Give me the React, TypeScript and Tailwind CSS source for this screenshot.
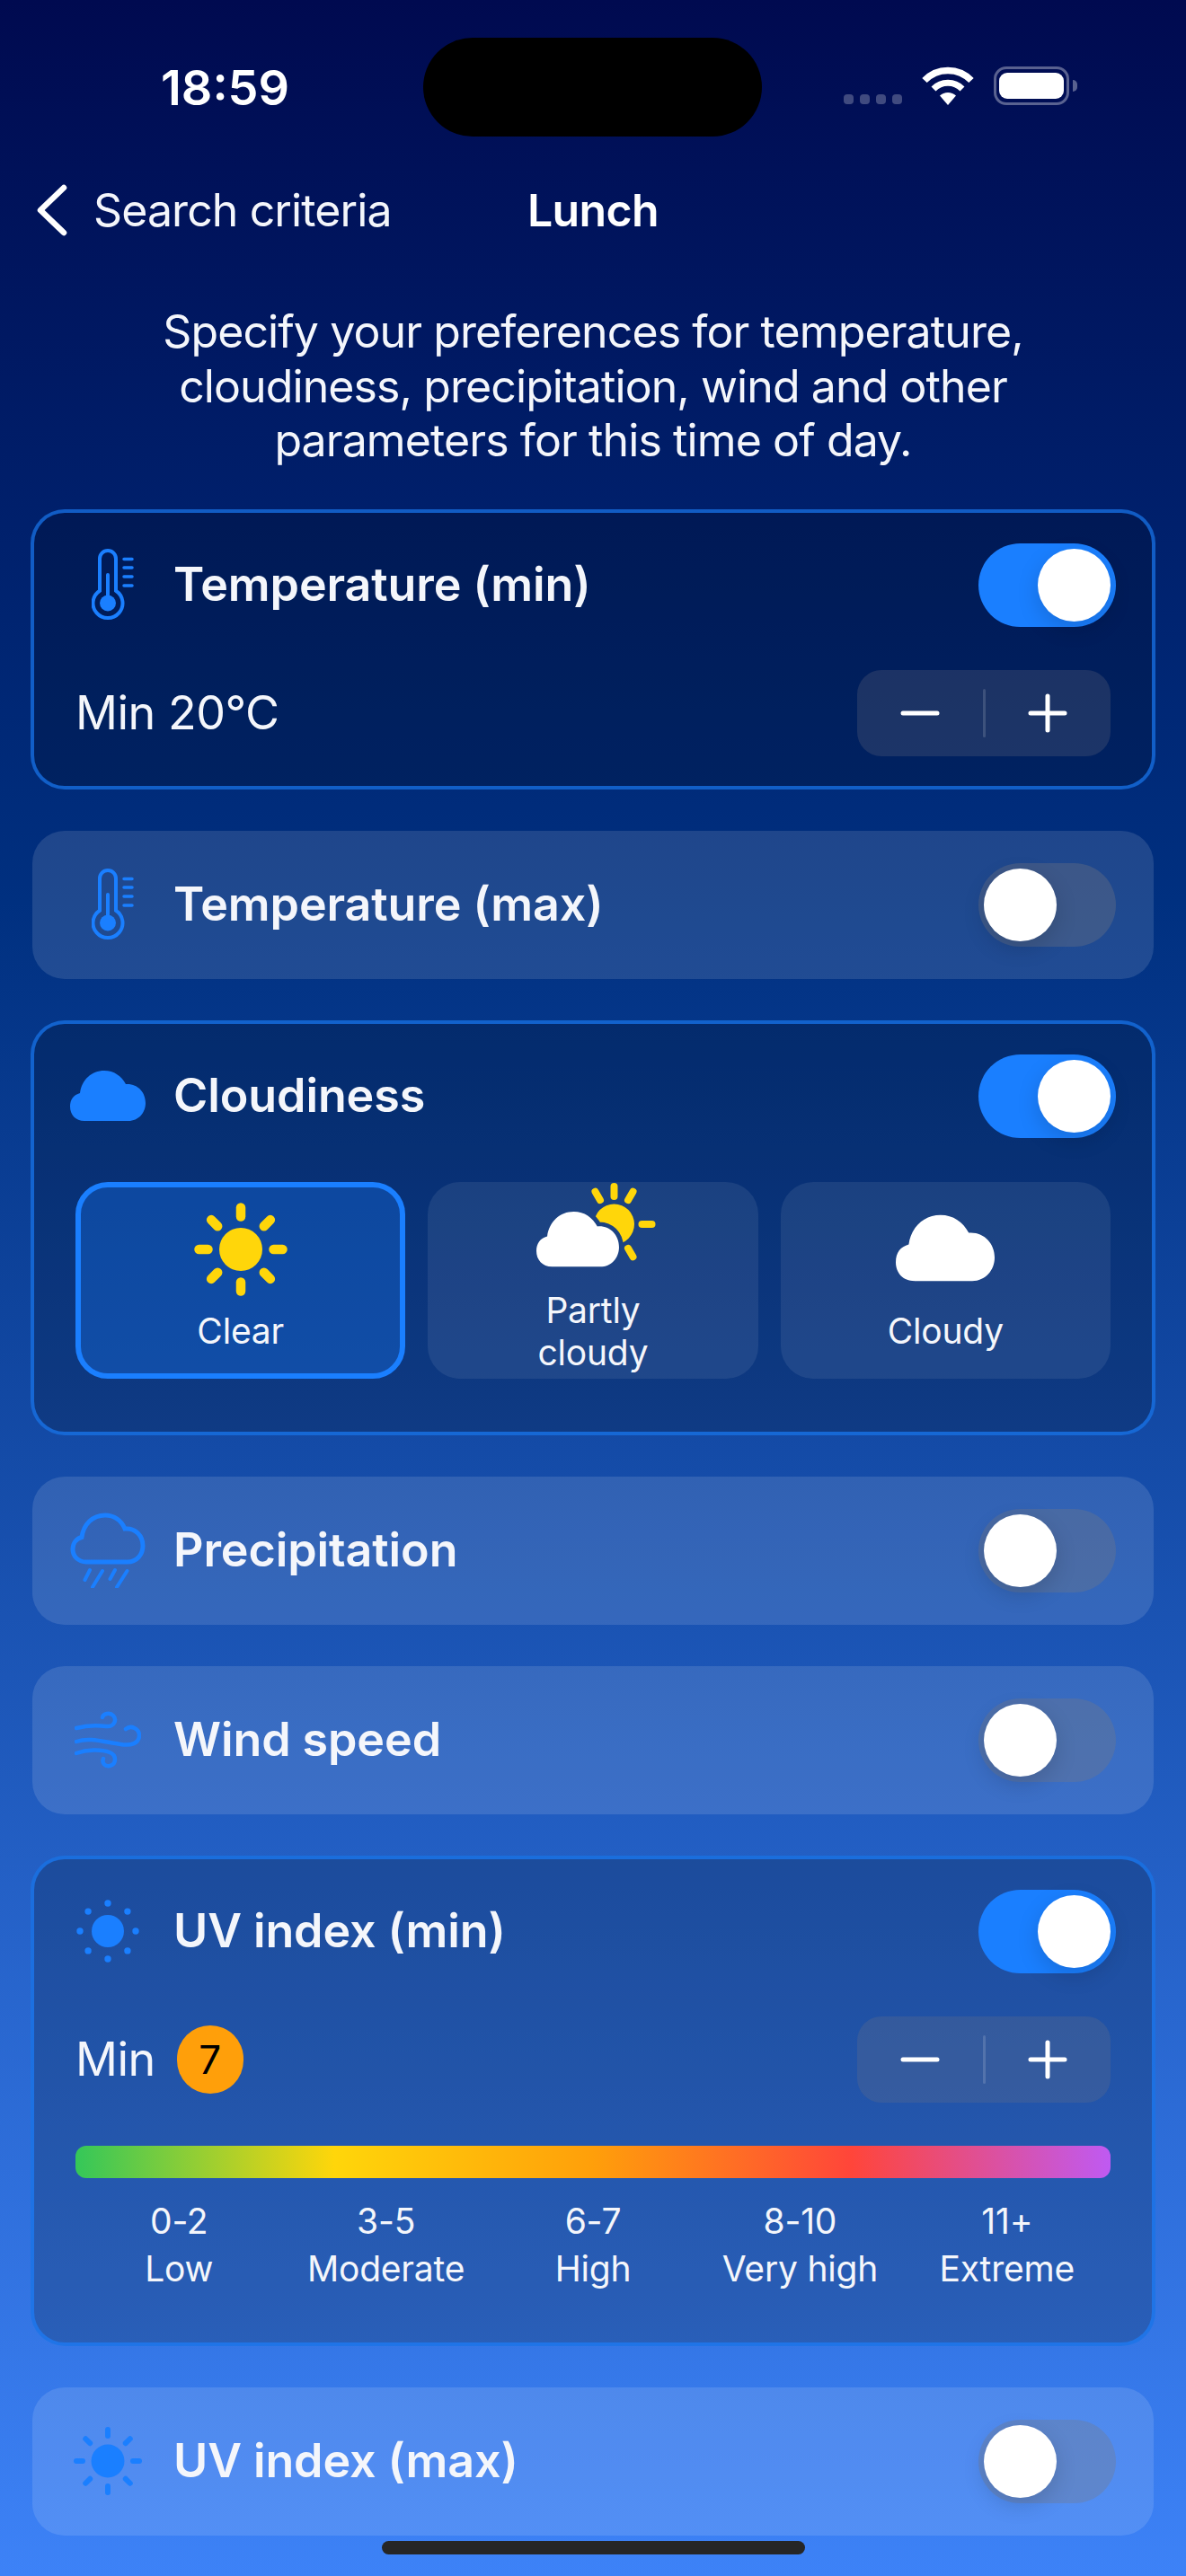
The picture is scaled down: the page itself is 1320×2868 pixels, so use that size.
import * as React from "react"

const CLOUD = "M16 56C6 56 0 49 0 40C0 32 4 27 11 25C13 10 24 0 38 0C49 0 57 6 62 15C75 14 84 24 84 36C84 47 76 56 65 56Z"

function Thermometer() {
  return (
    <svg width="47" height="80" viewBox="0 0 47 80" className="ml-[11px] shrink-0" fill="none" stroke="#1a7fff" strokeLinecap="round">
      <path d="M9 46.7V11a9 9 0 0 1 18 0V46.7A16.5 16.5 0 1 1 9 46.7Z" strokeWidth="4" />
      <circle cx="18" cy="60.5" r="9" fill="#1a7fff" stroke="none" />
      <path d="M18 29V55" strokeWidth="4" />
      <path d="M36 11.5H45M36 21H45M36 31H45M36 41H45" strokeWidth="3.5" />
    </svg>
  )
}

function CloudIcon() {
  return (
    <svg width="84" height="56" viewBox="0 0 84 56" className="shrink-0">
      <path d={CLOUD} fill="#1a7fff" />
    </svg>
  )
}

function RainIcon() {
  return (
    <svg width="84" height="84" viewBox="0 0 84 84" className="shrink-0" fill="none" stroke="#1a7fff" strokeLinecap="round">
      <path d="M18 55C8.500 55 3 48 3 41C3 34 7 29 13 27.500C15 13 25 3 39 3C49 3 57 9 61 18C73 17 81 26 81 37C81 47 74 55 64 55Z" strokeWidth="5" />
      <path d="M22 64L16.500 75M36 65L25 83M50 64L44.500 74M63.500 65L52 83" strokeWidth="4" />
    </svg>
  )
}

function WindIcon() {
  return (
    <svg width="74" height="64" viewBox="0 0 74 64" className="shrink-0" fill="none" stroke="#1a7fff" strokeWidth="4.500" strokeLinecap="round">
      <path d="M2 19C13 16 26 16 35 17C45 18 47 9 43 5C39 1 32 3 31 7" />
      <path d="M2 34C16 29 31 34 51 37C63 39 72 36 72 27C72 20 63 15 57 20" />
      <path d="M2 47C13 43 29 42 39 46C47 49 47 59 39 61C34 62 30 58 32 53" />
    </svg>
  )
}

function DottedSun() {
  const dots = [0, 45, 90, 135, 180, 225, 270, 315]
  return (
    <svg width="72" height="72" viewBox="-36 -36 72 72" className="shrink-0" fill="#1a7fff">
      <circle r="18" />
      {dots.map((a) => (
        <circle key={a} r="3.700" cx={31 * Math.cos((a * Math.PI) / 180)} cy={31 * Math.sin((a * Math.PI) / 180)} />
      ))}
    </svg>
  )
}

function Rays({ from, to, width, color, angles }: { from: number; to: number; width: number; color: string; angles: number[] }) {
  return (
    <>
      {angles.map((a) => {
        const r = (a * Math.PI) / 180
        return (
          <line
            key={a}
            x1={from * Math.cos(r)}
            y1={from * Math.sin(r)}
            x2={to * Math.cos(r)}
            y2={to * Math.sin(r)}
            stroke={color}
            strokeWidth={width}
            strokeLinecap="round"
          />
        )
      })}
    </>
  )
}

function RaySun() {
  return (
    <svg width="80" height="80" viewBox="-40 -40 80 80" className="shrink-0">
      <circle r="18.500" fill="#1a7fff" />
      <Rays from={28} to={35} width={6} color="#1a7fff" angles={[0, 45, 90, 135, 180, 225, 270, 315]} />
    </svg>
  )
}

function ClearSun() {
  return (
    <svg width="104" height="104" viewBox="-52 -52 104 104" className="shrink-0">
      <circle r="24" fill="#ffd60a" />
      <Rays from={36.500} to={46.500} width={10.500} color="#ffd60a" angles={[0, 45, 90, 135, 180, 225, 270, 315]} />
    </svg>
  )
}

function PartlyIcon() {
  return (
    <svg width="145" height="96" viewBox="0 0 145 96" className="shrink-0">
      <mask id="cut">
        <rect width="145" height="96" fill="white" />
        <path d={CLOUD} transform="translate(10 32) scale(1.095)" fill="black" stroke="black" strokeWidth="9" />
      </mask>
      <circle cx="96.500" cy="46" r="22.500" fill="#ffd60a" mask="url(#cut)" />
      <g transform="translate(96.500 46)">
        <Rays from={31} to={42} width={8} color="#ffd60a" angles={[0, 60, -60, -90, -120]} />
      </g>
      <path d={CLOUD} transform="translate(10 32) scale(1.095)" fill="white" />
    </svg>
  )
}

function CloudyIcon() {
  return (
    <svg width="110" height="75" viewBox="0 0 84 56" className="shrink-0">
      <path d={CLOUD} fill="white" />
    </svg>
  )
}

function Toggle({ on }: { on: boolean }) {
  return (
    <div className={on ? "flex h-[93px] w-[153px] shrink-0 -mr-[6px] items-center justify-end rounded-full bg-[#1a7fff] p-[6px]" : "flex h-[93px] w-[153px] shrink-0 -mr-[6px] items-center justify-start rounded-full bg-[#787880]/32 p-[6px]"}>
      <div className="h-[81px] w-[81px] rounded-full bg-white shadow-[0_8px_24px_rgba(0,0,0,0.15)]" />
    </div>
  )
}

function Stepper() {
  return (
    <div className="flex h-[96px] w-[282px] items-center rounded-[27px] bg-[#767680]/24">
      <div className="flex flex-1 items-center justify-center">
        <svg width="44" height="6" viewBox="0 0 44 6" stroke="white" strokeWidth="5" strokeLinecap="round">
          <path d="M3 3H41" />
        </svg>
      </div>
      <div className="h-[54px] w-[3px] rounded-full bg-white/15" />
      <div className="flex flex-1 items-center justify-center">
        <svg width="44" height="44" viewBox="0 0 44 44" stroke="white" strokeWidth="5" strokeLinecap="round">
          <path d="M3 22H41M22 3V41" />
        </svg>
      </div>
    </div>
  )
}

function Row({ icon, title, on }: { icon: React.ReactNode; title: string; on: boolean }) {
  return (
    <div className="flex items-center">
      <div className="flex w-[72px] shrink-0 justify-center">{icon}</div>
      <div className="ml-[37px] flex-1 text-[52px] leading-[62px] font-semibold tracking-[-0.1px] whitespace-nowrap text-[#f4f6fb]">{title}</div>
      <Toggle on={on} />
    </div>
  )
}

function OffCard({ icon, title }: { icon: React.ReactNode; title: string }) {
  return (
    <div className="mx-[36px] flex h-[165px] flex-col justify-center rounded-[36px] bg-white/12 px-[48px]">
      <Row icon={icon} title={title} on={false} />
    </div>
  )
}

function OnCard({ children, className }: { children: React.ReactNode; className: string }) {
  return (
    <div className={"mx-[34px] rounded-[38px] border-[4px] border-[#1a7fff]/65 bg-black/20 px-[46px] pt-[34px] " + className}>
      {children}
    </div>
  )
}

function Tile({ label, active, pad, gap, icon }: { label: React.ReactNode; active?: boolean; pad: string; gap: string; icon: React.ReactNode }) {
  return (
    <div className={(active ? "border-[6px] border-[#1a7fff] bg-[#1a7fff]/30 " : "bg-white/8 ") + "flex h-[219px] flex-col items-center rounded-[36px] " + pad}>
      {icon}
      <div className={"text-center text-[39px] leading-[47px] tracking-[-0.2px] text-[#f4f6fb] " + gap}>{label}</div>
    </div>
  )
}

const scale = [
  ["0-2", "Low"],
  ["3-5", "Moderate"],
  ["6-7", "High"],
  ["8-10", "Very high"],
  ["11+", "Extreme"],
]

export default function App() {
  return (
    <div className="relative h-[2868px] w-[1320px] overflow-hidden bg-linear-to-b/srgb from-[#000a50] via-[#003080] via-35% to-[#3d82f7] font-[Inter,sans-serif] text-white">
      {/* status bar */}
      <div className="flex h-[110px] items-center pt-0 mt-[42px]">
        <div className="w-[471px] pl-[179px] text-[54px] font-semibold">18:59</div>
        <div className="h-[110px] w-[377px] rounded-full bg-black" />
        <div className="ml-[91px] flex items-end pb-[13px] self-end h-[110px] translate-y-[-22px]">
          <div className="flex items-end gap-[7px] pb-[1px]">
            <div className="h-[11px] w-[11px] rounded-[4px] bg-white/25" />
            <div className="h-[11px] w-[11px] rounded-[4px] bg-white/25" />
            <div className="h-[11px] w-[11px] rounded-[4px] bg-white/25" />
            <div className="h-[11px] w-[11px] rounded-[4px] bg-white/25" />
          </div>
          <svg width="58" height="43" viewBox="0 0 58 43" className="ml-[22px]" fill="none" stroke="white">
            <path d="M3 15.500A36 36 0 0 1 55 15.500" strokeWidth="7.500" />
            <path d="M13 25A22.500 22.500 0 0 1 45 25" strokeWidth="7" />
            <path d="M29 43L20 32.500A13 13 0 0 1 38 32.500Z" fill="white" stroke="none" />
          </svg>
          <div className="relative ml-[22px] flex h-[43px] w-[84px] items-center justify-center rounded-[14px] border-[3px] border-white/35">
            <div className="h-[29px] w-[72px] rounded-[9px] bg-white" />
            <div className="absolute -right-[12px] top-[12px] h-[13px] w-[5px] rounded-r-full bg-white/35" />
          </div>
        </div>
      </div>

      {/* nav */}
      <div className="mt-[42px] grid h-[80px] grid-cols-[1fr_auto_1fr] items-center">
        <div className="flex items-center pl-[40px]">
          <svg width="36" height="58" viewBox="0 0 36 58" fill="none" stroke="white" strokeWidth="6.500" strokeLinecap="round" strokeLinejoin="round">
            <path d="M31 4L5 29L31 54" />
          </svg>
          <span className="ml-[28px] text-[50px] tracking-[-0.9px] whitespace-nowrap text-[#f4f6fb]">Search criteria</span>
        </div>
        <div className="text-[50px] font-semibold tracking-[-0.6px]">Lunch</div>
        <div />
      </div>

      {/* description */}
      <p className="mt-[65px] text-center text-[50px] leading-[60.500px] tracking-[-0.9px] whitespace-nowrap text-[#f4f6fb]">
        Specify your preferences for temperature,
        <br />
        cloudiness, precipitation, wind and other
        <br />
        parameters for this time of day.
      </p>

      {/* cards */}
      <div className="mt-[46px] flex flex-col gap-[46px]">
        <OnCard className="pb-[33px]">
          <Row icon={<Thermometer />} title="Temperature (min)" on />
          <div className="mt-[48px] flex items-center justify-between">
            <span className="text-[52px] tracking-[-0.5px] text-[#f4f6fb]">Min 20°C</span>
            <Stepper />
          </div>
        </OnCard>

        <OffCard icon={<Thermometer />} title="Temperature (max)" />

        <OnCard className="pb-[59px]">
          <Row icon={<CloudIcon />} title="Cloudiness" on />
          <div className="mt-[49px] grid grid-cols-3 gap-[25px]">
            <Tile active label="Clear" pad="pt-[17px]" gap="mt-[15px]" icon={<ClearSun />} />
            <Tile label={<>Partly<br />cloudy</>} pad="pt-[1px]" gap="mt-[22px]" icon={<PartlyIcon />} />
            <Tile label="Cloudy" pad="pt-[36px]" gap="mt-[31px]" icon={<CloudyIcon />} />
          </div>
        </OnCard>

        <OffCard icon={<RainIcon />} title="Precipitation" />
        <OffCard icon={<WindIcon />} title="Wind speed" />

        <OnCard className="pb-[56px]">
          <Row icon={<DottedSun />} title="UV index (min)" on />
          <div className="mt-[48px] flex items-center justify-between">
            <div className="flex items-center">
              <span className="text-[52px] tracking-[-0.5px] text-[#f4f6fb]">Min</span>
              <div className="ml-[24px] flex h-[76px] w-[74px] items-center justify-center rounded-full bg-[#ff9f0a] text-[44px] text-black">7</div>
            </div>
            <Stepper />
          </div>
          <div className="mt-[48px] h-[36px] rounded-[12px] bg-[linear-gradient(to_right,#34c759,#ffd60a_25%,#ff9f0a_50%,#ff453a_75%,#bf5af2)]" />
          <div className="mt-[21px] grid grid-cols-5">
            {scale.map(([range, name]) => (
              <div key={name} className="text-center text-[39px] leading-[53px] tracking-[-0.2px] whitespace-nowrap text-[#f4f6fb]">
                <div>{range}</div>
                <div>{name}</div>
              </div>
            ))}
          </div>
        </OnCard>

        <OffCard icon={<RaySun />} title="UV index (max)" />
      </div>

      {/* home indicator */}
      <div className="absolute bottom-[24px] left-[425px] h-[15px] w-[471px] rounded-full bg-[#262626]" />
    </div>
  )
}
